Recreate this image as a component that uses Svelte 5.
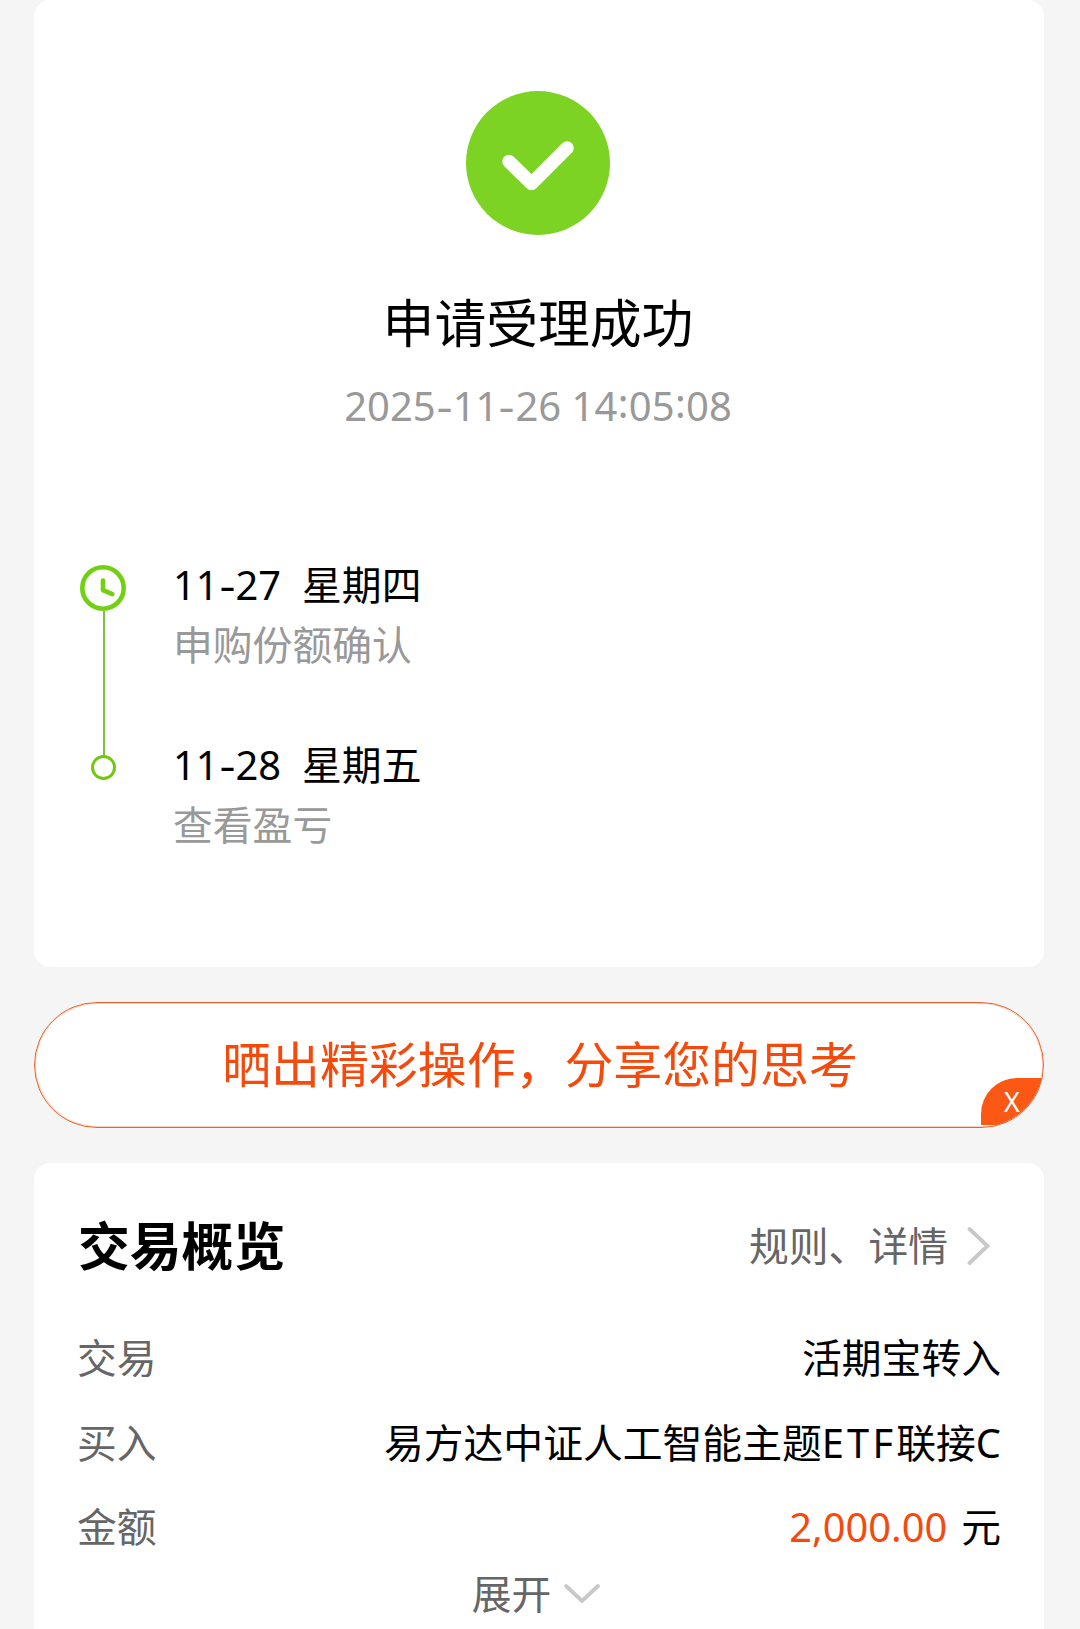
<script>
  const steps = [
    { date: '11-27', day: '星期四', note: '申购份额确认' },
    { date: '11-28', day: '星期五', note: '查看盈亏' }
  ];
  const rows = [
    { label: '交易', value: '活期宝转入' },
    { label: '买入', pre: '易方达中证人工智能主题', latin: 'ETF', post: '联接', tail: 'C' },
    { label: '金额', amount: '2,000.00', value: '元' }
  ];
  const time = '2025-11-26 14:05:08';
  const kind = (c) => (c === '-' ? 'hyphen' : c === ':' ? 'colon' : 'digit');
</script>

{#snippet numerals(text)}{#each text.split(/([-:])/) as part}<span class={kind(part)}>{part}</span>{/each}{/snippet}

<main>
  <section class="card result">
    <svg class="success" viewBox="0 0 144 144">
      <circle cx="72" cy="72" r="72" fill="#7dd324" />
      <path d="M43 70.500L65.500 92.500L101 57" fill="none" stroke="#fff" stroke-width="13.500" stroke-linecap="round" stroke-linejoin="round" />
    </svg>
    <h1>申请受理成功</h1>
    <p class="time">{@render numerals(time)}</p>
    <ol>
      {#each steps as step, i}
        <li>
          <div class="rail">
            {#if i === 0}
              <svg class="clock" viewBox="0 0 46 46">
                <circle cx="23" cy="23" r="20.700" />
                <path d="M23 15.500v9.700l9.300 4" />
              </svg>
              <span class="line"></span>
            {:else}
              <span class="dot"></span>
            {/if}
          </div>
          <div class="step">
            <p class="when"><span>{@render numerals(step.date)}</span><span>{step.day}</span></p>
            <p class="note">{step.note}</p>
          </div>
        </li>
      {/each}
    </ol>
  </section>

  <button class="share">
    <span class="share-text">晒出精彩操作，分享您的思考</span>
    <span class="close"><span>X</span></span>
  </button>

  <section class="card overview">
    <header>
      <h2>交易概览</h2>
      <a href="#rules">规则、详情
        <svg viewBox="0 0 24 40"><path d="M2.500 3L20.500 20L2.500 37" /></svg>
      </a>
    </header>
    <dl>
      {#each rows as row}
        <div class="row">
          <dt>{row.label}</dt>
          <dd>
            {#if row.latin}
              {row.pre}<span class="latin">{row.latin}</span>{row.post}<span>{row.tail}</span>
            {:else if row.amount}
              <span class="amount">{row.amount}</span>{row.value}
            {:else}
              {row.value}
            {/if}
          </dd>
        </div>
      {/each}
    </dl>
    <div class="expand">展开
      <svg viewBox="0 0 38 22"><path d="M3 3L19 18L35 3" /></svg>
    </div>
  </section>
</main>

<style>
  :global(body) { margin: 0; background: #f5f5f5; }
  main {
    box-sizing: border-box;
    height: 1629px;
    overflow: hidden;
    padding: 0 36px 0 34px;
    display: flex;
    flex-direction: column;
    font-family: "Noto Sans", "Noto Sans CJK SC", sans-serif;
    font-size: 39.8px;
    line-height: 60px;
    color: #000;
  }
  h1, h2, p, ol, dl, dd { margin: 0; padding: 0; }
  .card { background: #fff; border-radius: 16px; }
  .result {
    box-sizing: border-box;
    height: 967px;
    flex: none;
    display: flex;
    flex-direction: column;
    align-items: center;
    padding: 91px 2px 0 0;
  }
  .success { width: 144px; height: 144px; }
  h1 { font-size: 51.8px; font-weight: 400; line-height: 70px; margin-top: 53px; }
  .time { font-size: 40px; color: #999; margin-top: 18px; white-space: pre; }
  .hyphen { display: inline-block; width: 17px; text-align: center; line-height: 1; transform: scaleX(1.25); }
  .colon { display: inline-block; width: 11.5px; text-align: center; line-height: 0; vertical-align: 3px; }
  ol { list-style: none; align-self: stretch; margin-top: 119px; }
  li { display: flex; height: 180px; }
  .rail {
    width: 46px;
    margin-left: 46px;
    padding-top: 10px;
    display: flex;
    flex-direction: column;
    align-items: center;
  }
  .clock { width: 46px; height: 46px; flex: none; fill: none; stroke: #71d011; stroke-width: 4.6; }
  .clock path { stroke-linecap: round; stroke-linejoin: round; }
  .line { width: 2px; height: 145px; flex: none; background: #7cc142; margin-left: 1px; }
  .dot { box-sizing: border-box; width: 25px; height: 25px; border: 3px solid #71c811; border-radius: 50%; margin-top: 10px; }
  .step { margin-left: 47px; }
  .when { display: flex; gap: 21px; }
  .note { color: #999; }
  .share {
    position: relative;
    flex: none;
    box-sizing: border-box;
    height: 126px;
    margin: 35px 0;
    padding: 0;
    border: 1px solid #e7622c;
    box-shadow: inset 0 0 0 1px #fbd3c1;
    border-radius: 63px;
    background: #fff;
    color: #f54a0b;
    font: inherit;
    font-size: 48.9px;
    overflow: hidden;
  }
  .share-text { display: block; padding: 0 0 3px 2px; }
  .close {
    position: absolute;
    right: 0;
    bottom: 2px;
    width: 62px;
    height: 47px;
    border-radius: 36px 0 0 0;
    background: #fc5815;
    color: #fff;
    font-size: 27px;
    line-height: 48px;
    text-align: center;
  }
  .overview { flex: none; height: 490px; padding: 0 43px 0 44px; }
  header { display: flex; justify-content: space-between; padding-top: 48px; height: 70px; }
  h2 { font-size: 51.8px; line-height: 70px; font-weight: 700; }
  a { display: flex; align-items: center; color: #666; text-decoration: none; line-height: 74px; padding-right: 10px; }
  a svg { width: 24px; height: 40px; margin-left: 19px; }
  a path, .expand path { fill: none; stroke: #c8c8c8; stroke-width: 3.8; stroke-linecap: round; }
  dl { padding-top: 47px; }
  .row { display: flex; justify-content: space-between; height: 84.5px; }
  dt { color: #666; margin-left: -1px; }
  .latin { letter-spacing: 3.2px; }
  .amount { color: #f54a0b; margin-right: 14px; }
  .expand { display: flex; align-items: center; justify-content: center; height: 60px; margin-top: -18px; color: #666; padding-right: 6px; }
  .expand svg { width: 38px; height: 22px; margin-left: 12px; }
</style>
